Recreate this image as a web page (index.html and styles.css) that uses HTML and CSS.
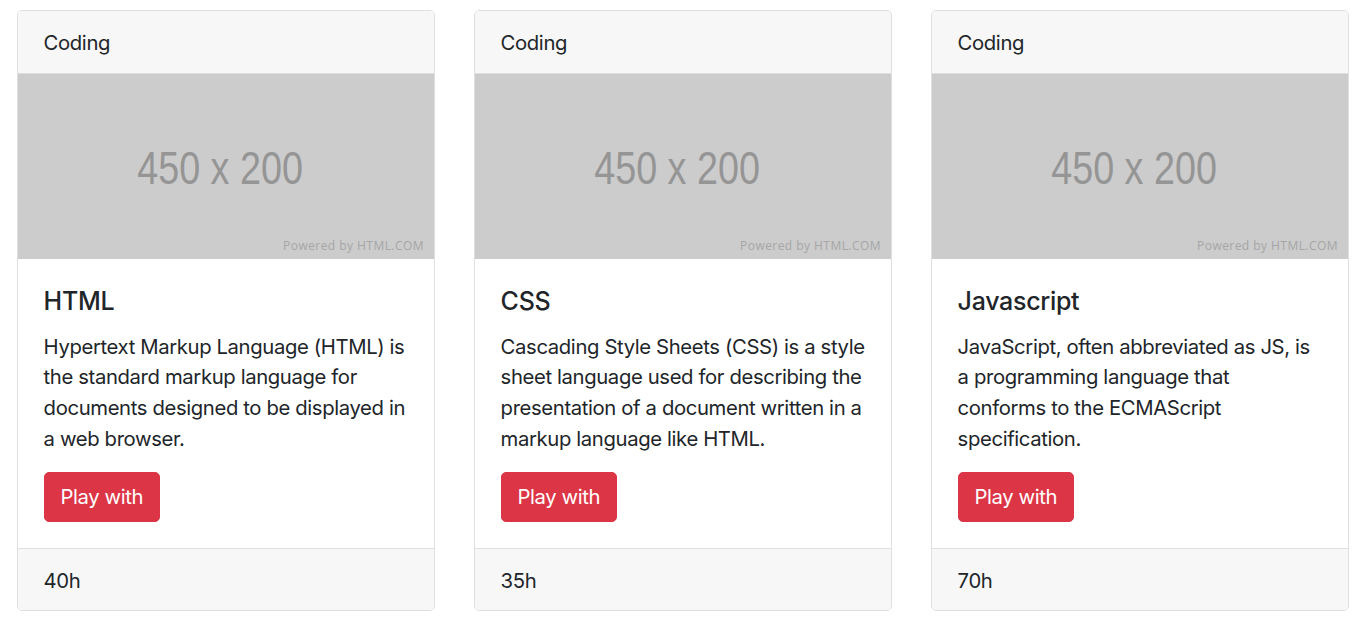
FILE: index.html
```html
<!DOCTYPE html>
<html lang="en">
<head>
<meta charset="utf-8">
<title>Coding cards</title>
<link rel="stylesheet" href="styles.css">
</head>
<body>
<div class="deck">
  <div class="card">
    <div class="card-header">Coding</div>
    <div class="placeholder">
      <span class="ph-size">450 x 200</span>
      <span class="ph-credit">Powered by HTML.COM</span>
    </div>
    <div class="card-body">
      <h5 class="card-title">HTML</h5>
      <p class="card-text">Hypertext Markup Language (HTML) is the standard markup language for documents designed to be displayed in a web browser.</p>
      <a class="btn" href="#">Play with</a>
    </div>
    <div class="card-footer">40h</div>
  </div>
  <div class="card">
    <div class="card-header">Coding</div>
    <div class="placeholder">
      <span class="ph-size">450 x 200</span>
      <span class="ph-credit">Powered by HTML.COM</span>
    </div>
    <div class="card-body">
      <h5 class="card-title">CSS</h5>
      <p class="card-text">Cascading Style Sheets (CSS) is a style sheet language used for describing the presentation of a document written in a markup language like HTML.</p>
      <a class="btn" href="#">Play with</a>
    </div>
    <div class="card-footer">35h</div>
  </div>
  <div class="card">
    <div class="card-header">Coding</div>
    <div class="placeholder">
      <span class="ph-size">450 x 200</span>
      <span class="ph-credit">Powered by HTML.COM</span>
    </div>
    <div class="card-body">
      <h5 class="card-title">Javascript</h5>
      <p class="card-text">JavaScript, often abbreviated as JS, is a programming language that conforms to the ECMAScript specification.</p>
      <a class="btn" href="#">Play with</a>
    </div>
    <div class="card-footer">70h</div>
  </div>
</div>
</body>
</html>
```

FILE: styles.css
```css
* { box-sizing: border-box; }
html, body { margin: 0; padding: 0; background: #fff; }
body {
  font-family: Inter, "Liberation Sans", Arial, sans-serif;
  font-size: 20.3px;
  letter-spacing: -0.375px;
  line-height: 1.5;
  color: #212529;
}
.deck {
  display: grid;
  grid-template-columns: repeat(3, 418px);
  column-gap: 39px;
  padding: 10px 18px 0 17px;
  align-items: stretch;
}
.card {
  display: flex;
  flex-direction: column;
  border: 1px solid #dfdfdf;
  border-radius: 5px;
  overflow: hidden;
  background: #fff;
}
.card-header {
  background: #f7f7f7;
  border-bottom: 1px solid #dfdfdf;
  padding: 17px 25.6px 0;
  height: 63px;
}
.placeholder {
  position: relative;
  background: #cccccc;
  aspect-ratio: 450 / 200;
  display: flex;
  align-items: center;
  justify-content: center;
}
.ph-size {
  font-family: "Liberation Sans", Arial, sans-serif;
  font-size: 46px;
  letter-spacing: 0;
  line-height: 1;
  color: #959595;
  transform: scaleX(0.82);
  margin-top: 4px;
  margin-right: 12px;
}
.ph-credit {
  position: absolute;
  right: 10px;
  bottom: 7px;
  font-family: "Open Sans", sans-serif;
  font-size: 12px;
  line-height: 1;
  color: #a6a6a6;
  letter-spacing: 0.45px;
}
.card-body {
  flex: 1;
  padding: 27px 25.6px 25.6px;
}
.card-title {
  margin: 0 0 16px;
  font-size: 25px;
  font-weight: 500;
  letter-spacing: -0.3px;
  line-height: 1.2;
}
.card-text {
  margin: 0 0 18px;
  line-height: 30.6px;
}
.btn {
  display: inline-block;
  background: #dc3545;
  color: #fff;
  text-decoration: none;
  border: 1px solid #dc3545;
  border-radius: 5px;
  padding: 9px 15.8px 8.4px;
  line-height: 30.7px;
}
.card-footer {
  background: #f7f7f7;
  border-top: 1px solid #dfdfdf;
  padding: 17px 25.6px 0;
  height: 62px;
}
```
